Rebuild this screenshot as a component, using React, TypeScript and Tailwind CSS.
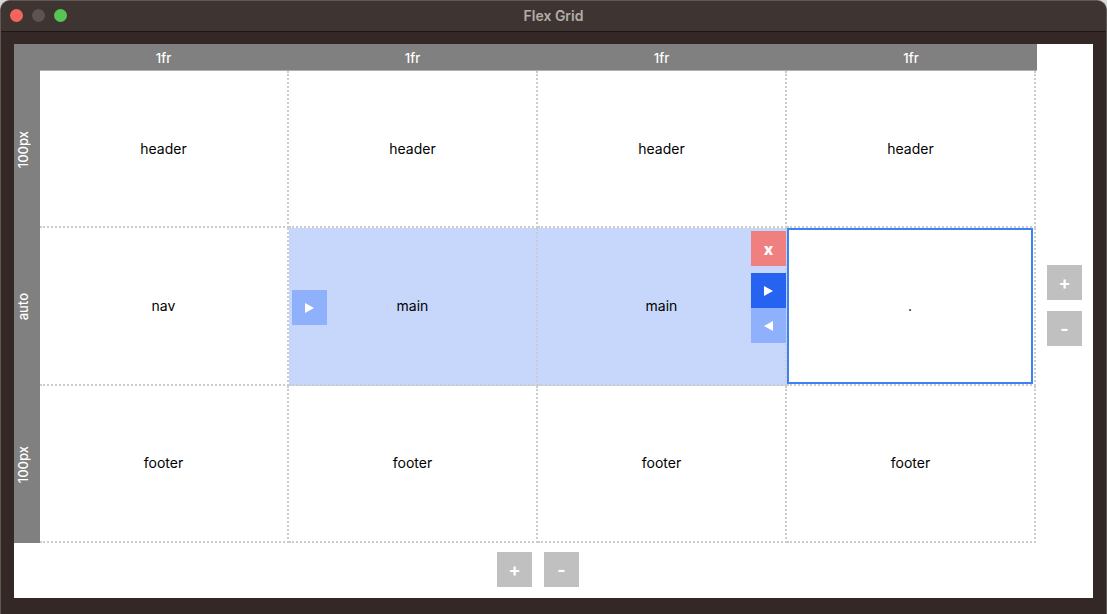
import React from "react";

const font = "font-['Inter','Liberation_Sans',sans-serif]";

function Tri({ dir = "right" }: { dir?: "right" | "left" }) {
  return (
    <svg width="9" height="10" viewBox="0 0 9 10" aria-hidden="true">
      <polygon points={dir === "right" ? "0,0 9,5 0,10" : "9,0 0,5 9,10"} fill="#fff" />
    </svg>
  );
}

function SideButton({ label }: { label: string }) {
  return (
    <button className="flex h-[35px] w-[35px] items-center justify-center bg-[#c0c0c0] text-[18px] font-bold leading-none text-white">
      {label}
    </button>
  );
}

function Cell({ children, blue }: { children: React.ReactNode; blue?: boolean }) {
  return (
    <div
      className={`relative flex items-center justify-center border-r-2 border-b-2 border-dotted border-[#cccccc] text-[14px] text-black ${
        blue ? "bg-[#c6d7fb]" : "bg-white"
      }`}
    >
      {children}
    </div>
  );
}

function TopHead({ last }: { last?: boolean }) {
  return (
    <div
      className={`flex items-center justify-center border-b border-[#b0b0b0] bg-[#808080] pr-[2px] pt-[3px] text-[13px] font-medium text-white ${
        last ? "mr-[-1px]" : ""
      }`}
    >
      1fr
    </div>
  );
}

function LeftHead({ label }: { label: string }) {
  return (
    <div className="flex items-center justify-center bg-[#808080] pr-[6px] text-[13px] font-medium text-white">
      <span className="rotate-180 [writing-mode:vertical-rl]">{label}</span>
    </div>
  );
}

export default function App() {
  const cols = [0, 1, 2, 3];
  return (
    <div className={`${font} h-[614px] w-[1107px] overflow-hidden bg-[#d9d9d9]`}>
      <div className="flex h-full flex-col overflow-hidden rounded-t-[10px] border-x border-t border-[#5f5856] bg-[#332826]">
        <div className="relative flex h-[31px] shrink-0 items-center justify-center border-b border-[#1d1817] bg-[#3e3533] pb-[2px]">
          <div className="absolute left-[9px] top-[8px] flex gap-[9px]">
            <span className="h-[13px] w-[13px] rounded-full bg-[#f6655b]" />
            <span className="h-[13px] w-[13px] rounded-full bg-[#5c5452]" />
            <span className="h-[13px] w-[13px] rounded-full bg-[#57c454]" />
          </div>
          <span className="text-[14px] font-semibold text-[#b3adaa]">Flex Grid</span>
        </div>

        <div className="flex min-h-0 flex-1 px-[13px] pb-[16px] pt-[12px]">
          <div className="flex flex-1 flex-col bg-white">
            <div className="flex">
              <div className="grid h-[499px] w-[1022px] shrink-0 grid-cols-[26px_repeat(4,1fr)] grid-rows-[27px_repeat(3,1fr)]">
                <div className="bg-[#808080]" />
                {cols.map((c) => (
                  <TopHead key={c} last={c === 3} />
                ))}

                <LeftHead label="100px" />
                {cols.map((c) => (
                  <Cell key={c}>header</Cell>
                ))}

                <LeftHead label="auto" />
                <Cell>nav</Cell>
                <Cell blue>
                  main
                  <button className="absolute left-[3px] top-[62px] flex h-[35px] w-[35px] items-center justify-center bg-[#8fb0fa]">
                    <Tri />
                  </button>
                </Cell>
                <Cell blue>
                  main
                  <div className="absolute right-[-1px] top-[3px] flex flex-col">
                    <button className="mb-[7px] flex h-[35px] w-[35px] items-center justify-center bg-[#f08080] text-[16px] font-extrabold leading-none text-white">
                      x
                    </button>
                    <button className="flex h-[35px] w-[35px] items-center justify-center bg-[#2563f0]">
                      <Tri />
                    </button>
                    <button className="flex h-[35px] w-[35px] items-center justify-center bg-[#8fb0fa]">
                      <Tri dir="left" />
                    </button>
                  </div>
                </Cell>
                <Cell>
                  <div className="mr-px flex h-full w-full items-center justify-center border-2 border-[#3b82f6]">
                    .
                  </div>
                </Cell>

                <LeftHead label="100px" />
                {cols.map((c) => (
                  <Cell key={c}>
                    <span className="mb-[2px]">footer</span>
                  </Cell>
                ))}
              </div>

              <div className="flex flex-1 flex-col justify-center gap-[11px] pl-[11px] pt-[24px]">
                <SideButton label="+" />
                <SideButton label="-" />
              </div>
            </div>

            <div className="flex justify-center gap-[12px] pr-[31px] pt-[9px]">
              <SideButton label="+" />
              <SideButton label="-" />
            </div>
          </div>
        </div>
      </div>
    </div>
  );
}
